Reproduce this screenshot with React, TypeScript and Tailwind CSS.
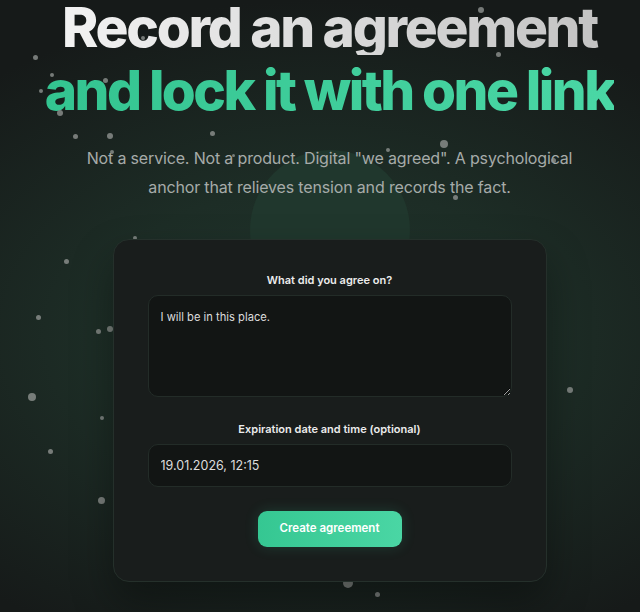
import { useState } from "react";

// floating specks in the background: [left, top, size]
const dots: [number, number, number][] = [
  [35, 57, 5], [52, 75, 4], [41, 91, 4], [60, 113, 6], [105, 80, 5], [143, 38, 4],
  [75, 136, 5], [110, 136, 6], [212, 133, 5], [481, 10, 6], [498, 54, 5], [444, 144, 8],
  [112, 152, 4], [233, 155, 3], [388, 150, 4], [553, 160, 5], [455, 197, 5], [135, 238, 4],
  [66, 261, 5], [38, 317, 5], [98, 331, 5], [110, 329, 6], [32, 397, 8], [102, 418, 4],
  [50, 451, 5], [101, 500, 7], [570, 390, 6], [348, 583, 10], [377, 594, 5],
];

export default function App() {
  const [text, setText] = useState("I will be in this place.");
  const [expires, setExpires] = useState("19.01.2026, 12:15");

  return (
    <div className="relative min-h-[612px] overflow-hidden bg-[#161a19] font-['Inter',sans-serif]">
      {/* glow */}
      <div className="absolute inset-0 bg-[radial-gradient(ellipse_80%_55%_at_50%_55%,#21362d_0%,#1d2d26_45%,#161a19_100%)]" />
      <div className="absolute left-[250px] top-[150px] h-[160px] w-[160px] rounded-full bg-[#20372d]" />

      {/* specks */}
      <div className="pointer-events-none absolute inset-0 z-10">
        {dots.map(([x, y, s], i) => (
          <span
            key={i}
            className="absolute rounded-full bg-[#8e9290] opacity-80"
            style={{ left: x - s / 2, top: y - s / 2, width: s, height: s }}
          />
        ))}
      </div>

      <main className="relative flex flex-col items-center pl-[19px]">
        <h1 className="text-center text-[55px] font-extrabold">
          <span className="block bg-linear-to-r from-[#f4f4f4] to-[#c2c2c2] bg-clip-text leading-[55px] tracking-[-0.042em] text-transparent">
            Record an agreement
          </span>
          <span className="mt-[4px] block bg-linear-to-r from-[#33c490] to-[#4ad7a5] bg-clip-text leading-[63px] tracking-[-0.047em] text-transparent">
            and lock it with one link
          </span>
        </h1>

        <p className="mt-[22px] max-w-[500px] text-center text-[16px] leading-[29px] tracking-[-0.01em] text-[#a6aba9]">
          Not a service. Not a product. Digital "we agreed". A psychological anchor that relieves tension and records the fact.
        </p>

        <form
          className="relative z-20 mt-[37px] flex w-[434px] flex-col items-center rounded-2xl border border-[#25302b] bg-[#191d1c] px-[34px] pb-[34px] pt-[30px] shadow-[0_20px_40px_rgba(0,0,0,0.35)]"
          onSubmit={(e) => e.preventDefault()}
        >
          <label className="mb-[5px] text-[11px] font-semibold leading-5 text-[#ececec]">What did you agree on?</label>
          <textarea
            value={text}
            onChange={(e) => setText(e.target.value)}
            className="h-[102px] w-full rounded-[10px] border border-[#232c28] bg-[#121514] px-3 py-[11px] text-[11.2px] leading-5 text-[#dcdcdc] outline-none"
          />

          <label className="mb-[5px] mt-[22px] text-[11px] font-semibold leading-5 text-[#ececec]">
            Expiration date and time (optional)
          </label>
          <input
            value={expires}
            onChange={(e) => setExpires(e.target.value)}
            className="h-[43px] w-full rounded-[10px] border border-[#232c28] bg-[#121514] px-3 text-[12.5px] text-[#dcdcdc] outline-none"
          />

          <button
            type="submit"
            className="mt-[24px] h-[36px] w-[144px] rounded-[9px] bg-linear-to-r from-[#35c792] to-[#4ad6a4] text-[11.5px] font-semibold text-white shadow-[0_0_14px_rgba(62,207,156,0.18)]"
          >
            Create agreement
          </button>
        </form>
      </main>
    </div>
  );
}
